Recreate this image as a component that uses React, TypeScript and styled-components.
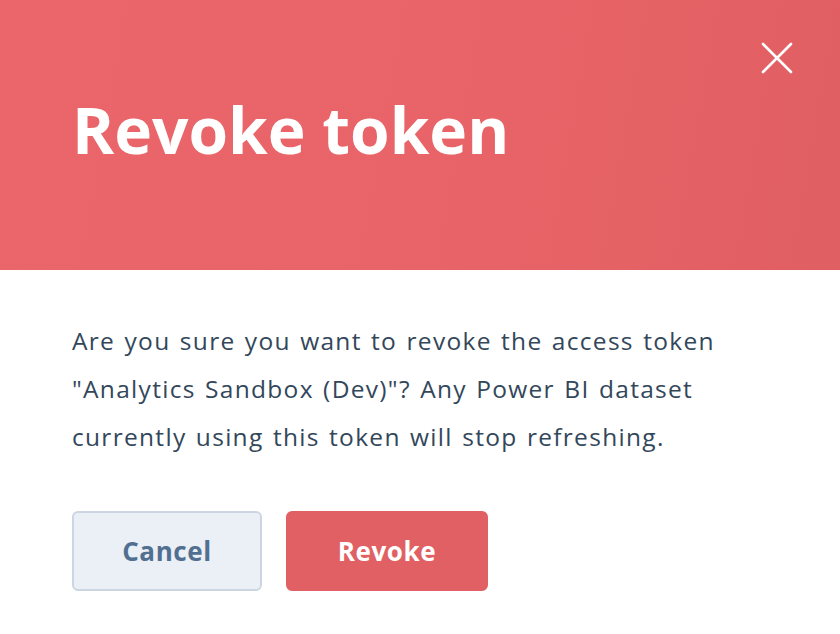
import React from 'react'
import styled, { createGlobalStyle } from 'styled-components'

const GlobalStyle = createGlobalStyle`
  html, body {
    margin: 0;
    padding: 0;
    background: #ffffff;
  }
  body {
    font-family: "Open Sans", "Noto Sans", sans-serif;
  }
`

const Modal = styled.div`
  width: 840px;
  height: 634px;
  display: flex;
  flex-direction: column;
  background: #ffffff;
`

const Header = styled.header`
  position: relative;
  height: 270px;
  box-sizing: border-box;
  padding: 88px 72px 0;
  background: linear-gradient(100deg, #eb666a 0%, #e96468 50%, #e05f62 100%);
`

const Title = styled.h1`
  margin: 0;
  font-family: "Open Sans", "Noto Sans", sans-serif;
  font-weight: 700;
  font-size: 64px;
  line-height: 84px;
  color: #ffffff;
`

const CloseButton = styled.button`
  position: absolute;
  top: 40px;
  right: 45px;
  width: 36px;
  height: 36px;
  padding: 0;
  border: 0;
  background: transparent;
  cursor: pointer;
  display: flex;
  align-items: center;
  justify-content: center;
`

const Body = styled.div`
  padding: 47px 72px 0;
  display: flex;
  flex-direction: column;
  gap: 50px;
`

const Message = styled.p`
  margin: 0;
  max-width: 670px;
  font-size: 24.5px;
  line-height: 48px;
  letter-spacing: 1.3px;
  word-spacing: 1.7px;
  color: #33475b;
`

const Actions = styled.div`
  display: flex;
  gap: 24px;
`

const Button = styled.button<{ $primary?: boolean }>`
  height: 80px;
  box-sizing: border-box;
  padding: 0 30px;
  width: ${(p) => (p.$primary ? '202px' : '190px')};
  border-radius: 6px;
  font-family: "Open Sans", "Noto Sans", sans-serif;
  font-weight: 700;
  font-size: 26px;
  letter-spacing: 0.6px;
  cursor: pointer;
  border: 2px solid ${(p) => (p.$primary ? '#e06063' : '#cbd6e2')};
  background: ${(p) => (p.$primary ? '#e06063' : '#eaf0f6')};
  color: ${(p) => (p.$primary ? '#ffffff' : '#516f90')};
`

const CloseIcon = () => (
  <svg width="32" height="32" viewBox="0 0 32 32" fill="none">
    <path d="M2 2L30 30M30 2L2 30" stroke="#ffffff" strokeWidth="2.6" strokeLinecap="round" />
  </svg>
)

export default function App() {
  return (
    <>
      <GlobalStyle />
      <Modal>
        <Header>
          <Title>Revoke token</Title>
          <CloseButton aria-label="Close">
            <CloseIcon />
          </CloseButton>
        </Header>
        <Body>
          <Message>
            Are you sure you want to revoke the access token "Analytics Sandbox (Dev)"? Any Power BI
            dataset currently using this token will stop refreshing.
          </Message>
          <Actions>
            <Button>Cancel</Button>
            <Button $primary>Revoke</Button>
          </Actions>
        </Body>
      </Modal>
    </>
  )
}
